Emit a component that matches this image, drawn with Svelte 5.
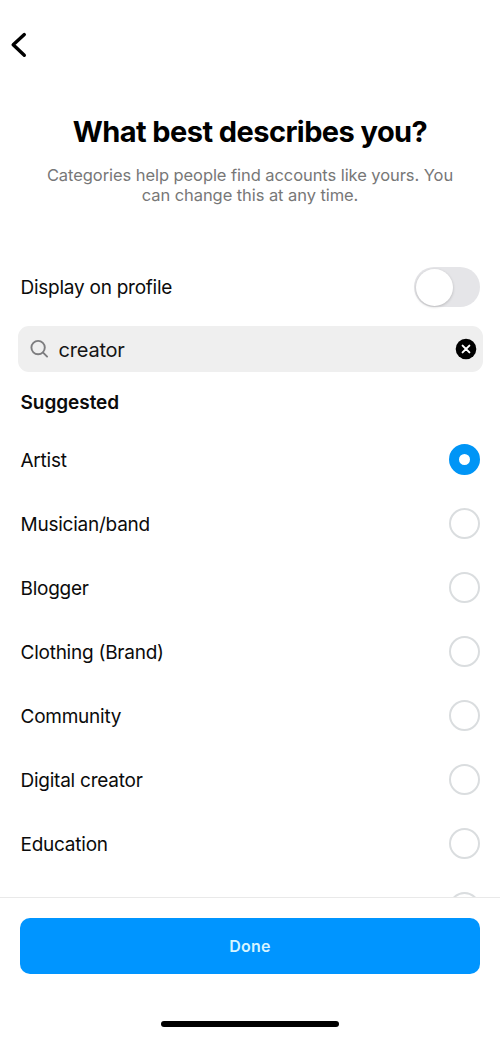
<script>
  const categories = ['Artist', 'Musician/band', 'Blogger', 'Clothing (Brand)', 'Community', 'Digital creator', 'Education', ''];
  let selected = $state('Artist');
  let query = $state('creator');
  let displayed = $state(false);
</script>

<div class="screen">
  <main>
    <nav>
      <button class="back" aria-label="Back">
        <svg width="18" height="26" viewBox="0 0 18 26"><path d="M14.300 2.600 3.200 12.800l11.100 10.500" fill="none" stroke="#000" stroke-width="3.400" stroke-linecap="round" stroke-linejoin="round" /></svg>
      </button>
    </nav>
    <header>
      <h1>What best describes you?</h1>
      <p>Categories help people find accounts like yours. You<br />can change this at any time.</p>
    </header>
    <div class="setting">
      <span>Display on profile</span>
      <button class="switch" class:on={displayed} aria-label="Display on profile" onclick={() => (displayed = !displayed)}><i></i></button>
    </div>
    <div class="search">
      <svg width="20" height="20" viewBox="0 0 20 20" fill="none" stroke="#7d7d7f" stroke-width="1.900" stroke-linecap="round"><circle cx="8.100" cy="8.600" r="6.700" /><path d="m13.100 13.600 4 4" /></svg>
      <input bind:value={query} aria-label="Search" />
      <button class="clear" aria-label="Clear" onclick={() => (query = '')}>
        <svg width="22" height="22" viewBox="0 0 22 22"><circle cx="11" cy="11" r="10.300" /><path d="m7.600 7.600 6.800 6.800m0-6.800-6.800 6.800" stroke="#fff" stroke-width="2" stroke-linecap="round" /></svg>
      </button>
    </div>
    <h2>Suggested</h2>
    <ul>
      {#each categories as name}
        <li>
          <label>
            <span>{name}</span>
            <input type="radio" bind:group={selected} value={name} />
          </label>
        </li>
      {/each}
    </ul>
  </main>
  <footer>
    <button class="done">Done</button>
    <div class="home"></div>
  </footer>
</div>

<style>
  :global(body) { margin: 0; background: #fff; }
  .screen {
    display: flex;
    flex-direction: column;
    height: 1038px;
    overflow: hidden;
    background: #fff;
    color: #0b0b0b;
    font: 19px/24px Inter, sans-serif;
  }
  button { display: block; border: 0; padding: 0; background: none; font: inherit; }
  svg { display: block; flex: none; }
  main { height: 897px; overflow: hidden; flex: none; }
  nav { height: 90px; box-sizing: border-box; padding: 32px 0 0 10px; }
  header { height: 164px; text-align: center; }
  h1 { margin: 0; padding-top: 23px; font-size: 29px; line-height: 38px; font-weight: 700; letter-spacing: -0.57px; color: #000; }
  p { margin: 14px 0 0; font-size: 16.500px; line-height: 20px; color: #777; letter-spacing: -0.07px; white-space: nowrap; }
  .setting { display: flex; align-items: center; justify-content: space-between; height: 66px; padding: 0 20px 0 20.500px; }
  .setting span { padding-top: 2px; letter-spacing: -0.25px; }
  .switch { width: 66px; height: 40px; padding: 1.500px; box-sizing: border-box; border-radius: 20px; background: #e5e5e8; }
  .switch i { display: block; width: 37px; height: 37px; border-radius: 50%; background: #fff; box-shadow: 0 1px 3px #0003; }
  .switch.on { background: #0095f6; }
  .switch.on i { margin-left: auto; }
  .search { display: flex; align-items: center; box-sizing: border-box; height: 46px; margin: 6px 17px 0 18px; padding: 0 6px 0 12px; border-radius: 11px; background: #efefef; }
  .search input { flex: 1; min-width: 0; margin-left: 8.500px; padding: 2px 0 0; border: 0; outline: 0; background: none; color: #151515; font: 20px/26px Inter, sans-serif; letter-spacing: -0.2px; }
  h2 { margin: 18px 20.500px 13px; font-size: 19px; line-height: 26px; font-weight: 600; letter-spacing: -0.05px; }
  ul { margin: 0; padding: 0; list-style: none; }
  label { display: flex; align-items: center; justify-content: space-between; height: 64px; padding: 0 20px 0 20.500px; letter-spacing: -0.24px; }
  input[type='radio'] { appearance: none; box-sizing: border-box; width: 31px; height: 31px; margin: 0 0 3px; border: 2px solid #dadddf; border-radius: 50%; background: #fff; }
  input[type='radio']:checked { border: 10px solid #0095f6; }
  footer { flex: 1; box-sizing: border-box; border-top: 1px solid #e9e9e9; padding: 20px 20px 0; }
  .done { width: 100%; height: 56px; border-radius: 10px; background: #0095ff; color: #d5f4ff; font-size: 16px; font-weight: 600; letter-spacing: 0.2px; }
  .home { width: 178px; height: 6px; margin: 47px auto 0; border-radius: 3px; background: #000; }
</style>
